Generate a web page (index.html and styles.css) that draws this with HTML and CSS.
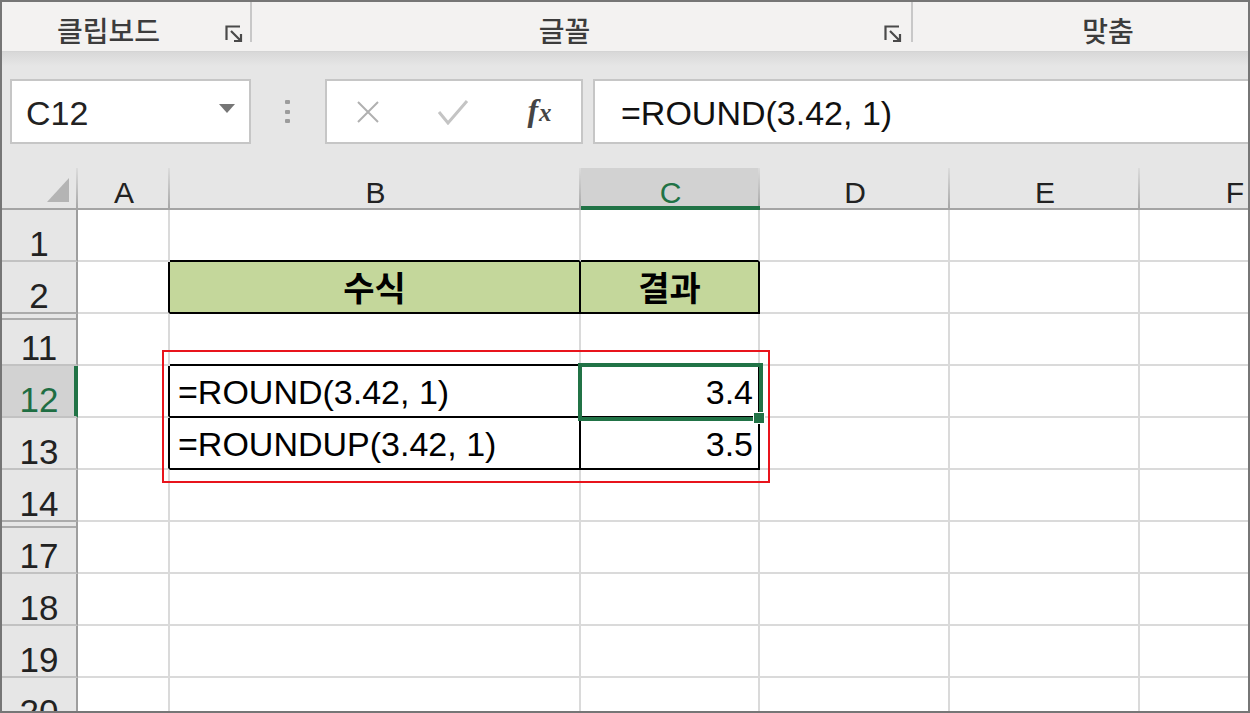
FILE: index.html
```html
<!DOCTYPE html>
<html lang="ko">
<head>
  <meta charset="UTF-8">
  <title>ROUND 함수</title>
  <link rel="stylesheet" href="styles.css">
</head>
<body>
  <div class="window">
    <!-- 리본 그룹 이름 -->
    <div class="ribbon">
      <div class="group g-clip">
        <span class="label">클립보드</span>
        <svg class="launcher" viewBox="0 0 18 18"><path d="M1.5 15V1.5H15M6 6l9 9M16 9v7H9" fill="none" stroke="#4a4a4a" stroke-width="2.2"/></svg>
      </div>
      <div class="sep"></div>
      <div class="group g-font">
        <span class="label">글꼴</span>
        <svg class="launcher" viewBox="0 0 18 18"><path d="M1.5 15V1.5H15M6 6l9 9M16 9v7H9" fill="none" stroke="#4a4a4a" stroke-width="2.2"/></svg>
      </div>
      <div class="sep"></div>
      <div class="group g-align">
        <span class="label">맞춤</span>
      </div>
    </div>

    <!-- 수식 입력줄 -->
    <div class="toolbar">
      <div class="name-box"><span>C12</span><span class="caret"></span></div>
      <div class="grip"><i></i><i></i><i></i></div>
      <div class="fx-buttons">
        <svg width="24" height="22" viewBox="0 0 24 22"><path d="M2 1l20 20M22 1L2 21" stroke="#b0b0b0" stroke-width="2"/></svg>
        <svg width="32" height="26" viewBox="0 0 32 26"><path d="M2 13l9 11L30 2" fill="none" stroke="#c4c4c4" stroke-width="3"/></svg>
        <span class="fx"><i>f</i><i class="sub">x</i></span>
      </div>
      <div class="formula-input">=ROUND(3.42, 1)</div>
    </div>

    <!-- 시트 -->
    <div class="sheet">
      <div class="row head-row">
        <div class="corner"><svg width="22" height="24" viewBox="0 0 22 24"><path d="M22 0V24H0z" fill="#b4b4b4"/></svg></div>
        <div>A</div>
        <div>B</div>
        <div class="cur-col">C</div>
        <div>D</div>
        <div>E</div>
        <div>F</div>
      </div>
      <div class="row">
        <div class="row-head">1</div>
        <div></div><div class="bk-b"></div><div class="bk-b"></div><div></div><div></div><div></div>
      </div>
      <div class="row">
        <div class="row-head before-hidden">2</div>
        <div class="bk-r"></div>
        <div class="th fill bk-r bk-b">수식</div>
        <div class="th fill bk-r bk-b">결과</div>
        <div></div><div></div><div></div>
      </div>
      <div class="row">
        <div class="row-head after-hidden">11</div>
        <div></div><div class="bk-b"></div><div class="bk-b"></div><div></div><div></div><div></div>
      </div>
      <div class="row">
        <div class="row-head cur-row">12</div>
        <div class="bk-r"></div>
        <div class="txt bk-r bk-b">=ROUND(3.42, 1)</div>
        <div class="txt num bk-r bk-b">3.4</div>
        <div></div><div></div><div></div>
      </div>
      <div class="row">
        <div class="row-head">13</div>
        <div class="bk-r"></div>
        <div class="txt bk-r bk-b">=ROUNDUP(3.42, 1)</div>
        <div class="txt num bk-r bk-b">3.5</div>
        <div></div><div></div><div></div>
      </div>
      <div class="row">
        <div class="row-head before-hidden">14</div>
        <div></div><div></div><div></div><div></div><div></div><div></div>
      </div>
      <div class="row">
        <div class="row-head after-hidden">17</div>
        <div></div><div></div><div></div><div></div><div></div><div></div>
      </div>
      <div class="row">
        <div class="row-head">18</div>
        <div></div><div></div><div></div><div></div><div></div><div></div>
      </div>
      <div class="row">
        <div class="row-head">19</div>
        <div></div><div></div><div></div><div></div><div></div><div></div>
      </div>
      <div class="row">
        <div class="row-head">20</div>
        <div></div><div></div><div></div><div></div><div></div><div></div>
      </div>

      <div class="red-box"></div>
      <div class="selection"><i class="handle"></i></div>
    </div>
  </div>
</body>
</html>
```

FILE: styles.css
```css
/* 전체 */
body {
  margin: 0;
}
.window {
  width: 1250px;
  height: 713px;
  box-sizing: border-box;
  border: 2px solid #767676;
  background: #e6e6e6;
  display: flex;
  flex-direction: column;
  overflow: hidden;
  font-family: "Liberation Sans", Arial, sans-serif;
}

/* 리본 */
.ribbon {
  flex: none;
  height: 50px;
  box-sizing: border-box;
  display: flex;
  background: #f3f2f1;
  border-bottom: 1px solid #d4d4d4;
}
.group {
  flex: none;
  display: flex;
  align-items: center;
  height: 100%;
}
.g-clip {
  width: 248px;
}
.g-font {
  width: 659px;
}
.g-align {
  width: 390px;
}
.label {
  flex: 1;
  text-align: center;
  font-family: "Noto Sans CJK KR", sans-serif;
  font-weight: 500;
  font-size: 28px;
  line-height: 28px;
  padding-top: 6px;
  color: #3c3c3c;
}
.g-clip .label {
  padding-right: 10px;
}
.g-font .label {
  padding-right: 7px;
}
.launcher {
  flex: none;
  width: 18px;
  height: 18px;
  margin: 15px 7px 0 0;
}
.g-font .launcher {
  margin-right: 9px;
}
.sep {
  flex: none;
  width: 2px;
  height: 40px;
  background: #c8c8c8;
}

/* 수식 입력줄 */
.toolbar {
  flex: none;
  display: flex;
  align-items: center;
  height: 65px;
  padding: 27px 0 24px 8px;
  background: linear-gradient(#d8d8d8, #e6e6e6 14px);
}
.name-box {
  flex: none;
  width: 241px;
  height: 65px;
  box-sizing: border-box;
  border: 2px solid #c6c6c6;
  background: #fff;
  display: flex;
  align-items: center;
  justify-content: space-between;
  padding: 3px 14px 0 14px;
  font-size: 34px;
  color: #222;
}
.caret {
  border-left: 8.5px solid transparent;
  border-right: 8.5px solid transparent;
  border-top: 9px solid #767676;
  margin-top: -9px;
}
.grip {
  flex: none;
  display: flex;
  flex-direction: column;
  gap: 5.5px;
  margin-left: 34px;
}
.grip i {
  width: 5px;
  height: 4px;
  border-radius: 1px;
  background: #9c9c9c;
}
.fx-buttons {
  flex: none;
  margin-left: 35px;
  width: 258px;
  height: 65px;
  box-sizing: border-box;
  border: 2px solid #c6c6c6;
  background: #fff;
  display: grid;
  grid-template-columns: 82px 87px 87px;
  align-items: center;
  justify-items: center;
}
.fx {
  font-family: "Liberation Serif", "Times New Roman", serif;
  font-weight: 700;
  font-size: 32px;
  color: #454545;
  padding-bottom: 2px;
}
.fx .sub {
  font-size: 25px;
  margin-left: 1px;
}
.formula-input {
  flex: 1;
  margin-left: 10px;
  height: 65px;
  box-sizing: border-box;
  border: 2px solid #c6c6c6;
  border-right: none;
  background: #fff;
  display: flex;
  align-items: center;
  padding: 3px 0 0 26px;
  font-size: 34px;
  color: #111;
}

/* 시트 */
.sheet {
  flex: 1;
  position: relative;
  overflow: hidden;
  background: #fff;
}
.row {
  display: grid;
  grid-template-columns: 76px 92px 411px 179px 190px 190px 190px;
  height: 52px;
}
.row > div {
  box-sizing: border-box;
  border-right: 2px solid #dadada;
  border-bottom: 2px solid #dadada;
  display: flex;
  align-items: flex-end;
  min-width: 0;
  white-space: nowrap;
}

/* 열 머리글 */
.head-row {
  height: 42px;
}
.head-row > div {
  border-right: none;
  border-bottom: 2px solid #a4a4a4;
  background: linear-gradient(#dcdcdc, #a8a8a8) right top / 2px 100% no-repeat, #e6e6e6;
  justify-content: center;
  font-size: 30px;
  line-height: 30px;
  color: #222;
}
.head-row > .corner {
  justify-content: flex-end;
  padding: 0 9px 6px 0;
}
.head-row > .cur-col {
  background-color: #d2d2d2;
  border-bottom-color: #217346;
  box-shadow: inset 0 -2px #217346;
  color: #217346;
}

/* 행 머리글 */
.row > .row-head {
  background: #e6e6e6;
  border-right-color: #9e9e9e;
  border-bottom-color: #c2c2c2;
  justify-content: center;
  font-size: 35px;
  line-height: 30px;
  padding-bottom: 1px;
  color: #222;
}
.row > .before-hidden {
  border-bottom-color: #ababab;
}
.row > .after-hidden {
  background: linear-gradient(#ababab, #ababab) 0 4px / 100% 2px no-repeat, #e6e6e6;
}
.row > .cur-row {
  background: #d2d2d2;
  border-right-color: #217346;
  box-shadow: inset -2px 0 #217346;
  color: #1f6e43;
}

/* 셀 */
.row > .fill {
  background: #c4d79b;
}
.row > .bk-r {
  border-right-color: #000;
}
.row > .bk-b {
  border-bottom-color: #000;
}
.th {
  justify-content: center;
  font-family: "Noto Sans CJK KR", sans-serif;
  font-weight: 700;
  font-size: 34px;
  line-height: 40px;
  padding-bottom: 5px;
  color: #000;
}
.txt {
  padding: 0 0 4px 8px;
  font-size: 34px;
  line-height: 40px;
  color: #000;
}
.row > .num {
  justify-content: flex-end;
  padding: 0 5px 4px 0;
}

/* 강조 표시 */
.red-box {
  position: absolute;
  left: 160px;
  top: 182px;
  width: 608px;
  height: 133px;
  box-sizing: border-box;
  border: 2px solid #e8141c;
}
.selection {
  position: absolute;
  left: 576px;
  top: 195px;
  width: 185px;
  height: 58px;
  box-sizing: border-box;
  border: 4px solid #217346;
}
.handle {
  position: absolute;
  left: 171px;
  top: 45px;
  width: 10px;
  height: 10px;
  background: #217346;
  border: 1px solid #fff;
}
```
